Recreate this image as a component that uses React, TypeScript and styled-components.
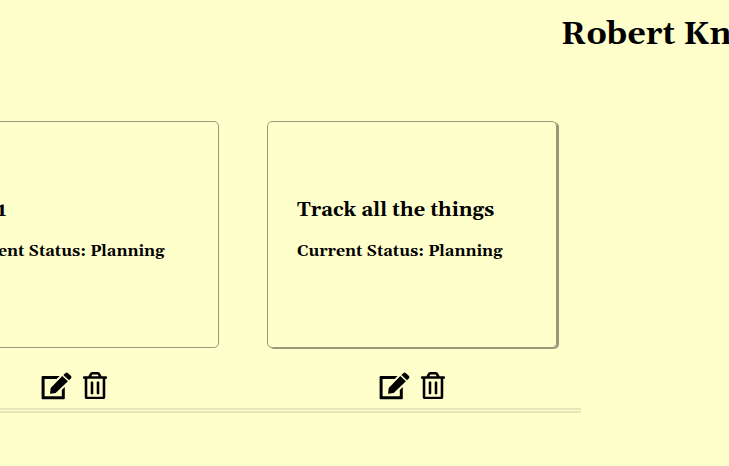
import React from "react";
import styled, { createGlobalStyle } from "styled-components";
import { FaRegTrashAlt } from "react-icons/fa";

const GlobalStyle = createGlobalStyle`
  html, body { margin: 0; background: #ffffcc; overflow: hidden; }
  * { box-sizing: border-box; }
`;

const Page = styled.main`
  width: 729px;
  height: 466px;
  overflow: hidden;
  background: #ffffcc;
  color: #000;
  font-family: Georgia, Gelasio, "Liberation Serif", serif;
`;

const Header = styled.header`
  height: 121px;
  padding: 17px 0 0 561px;
`;

const Name = styled.h1`
  margin: 0;
  font-size: 32px;
  line-height: 36px;
  white-space: nowrap;
`;

const Board = styled.section`
  display: flex;
  gap: 48px;
  width: 652px;
  height: 292px;
  margin-left: -71px;
  border-bottom: 5px double rgba(0, 0, 0, 0.1);
`;

const Project = styled.article`
  flex: 0 0 290px;
`;

const Card = styled.div<{ $raised?: boolean }>`
  height: 227px;
  padding: 75px 0 0 29px;
  border: 1px solid #99997a;
  border-radius: 5px;
  box-shadow: ${(p) => (p.$raised ? "2px 1px 0 #99997a" : "none")};
  white-space: nowrap;
`;

const Title = styled.h2<{ $inset: number }>`
  margin: 0;
  padding-left: ${(p) => p.$inset}px;
  font-size: 20px;
  line-height: 26px;
`;

const Status = styled.h3`
  margin: 16px 0 0;
  font-size: 16px;
  line-height: 24px;
`;

const Actions = styled.div`
  display: flex;
  gap: 11px;
  padding: 24px 0 0 112px;
  svg { display: block; }
`;

const EditSvg = styled.svg`
  width: 31px;
  height: 28px;
`;

const TrashIcon = styled(FaRegTrashAlt)`
  width: 24px;
  height: 27.4px;
`;

function EditIcon() {
  return (
    <EditSvg viewBox="0 0 31 28" fill="currentColor">
      <path d="M1.6 4H18.6L15.6 7H3.6V24.3H20.8V18L23.8 15V26.3Q23.8 27.3 22.8 27.3H1.6Q.6 27.3.6 26.3V5Q.6 4 1.6 4Z" />
      <path d="M21.3 4 26.9 9.3 14.7 21 9.6 21.8Q9 21.8 9.1 21.2L9.7 15.9Z" />
      <path d="M22.4 3 24.6 1Q25.7 0 26.8 1L30 4.1Q31 5.2 30 6.3L28 8.3Z" />
    </EditSvg>
  );
}

const projects = [
  { title: "1", inset: 38, raised: false },
  { title: "Track all the things", inset: 0, raised: true },
];

export default function App() {
  return (
    <Page>
      <GlobalStyle />
      <Header><Name>Robert Kn</Name></Header>
      <Board>
        {projects.map((p) => (
          <Project key={p.title}>
            <Card $raised={p.raised}>
              <Title $inset={p.inset}>{p.title}</Title>
              <Status>Current Status: Planning</Status>
            </Card>
            <Actions>
              <EditIcon />
              <TrashIcon />
            </Actions>
          </Project>
        ))}
      </Board>
    </Page>
  );
}
